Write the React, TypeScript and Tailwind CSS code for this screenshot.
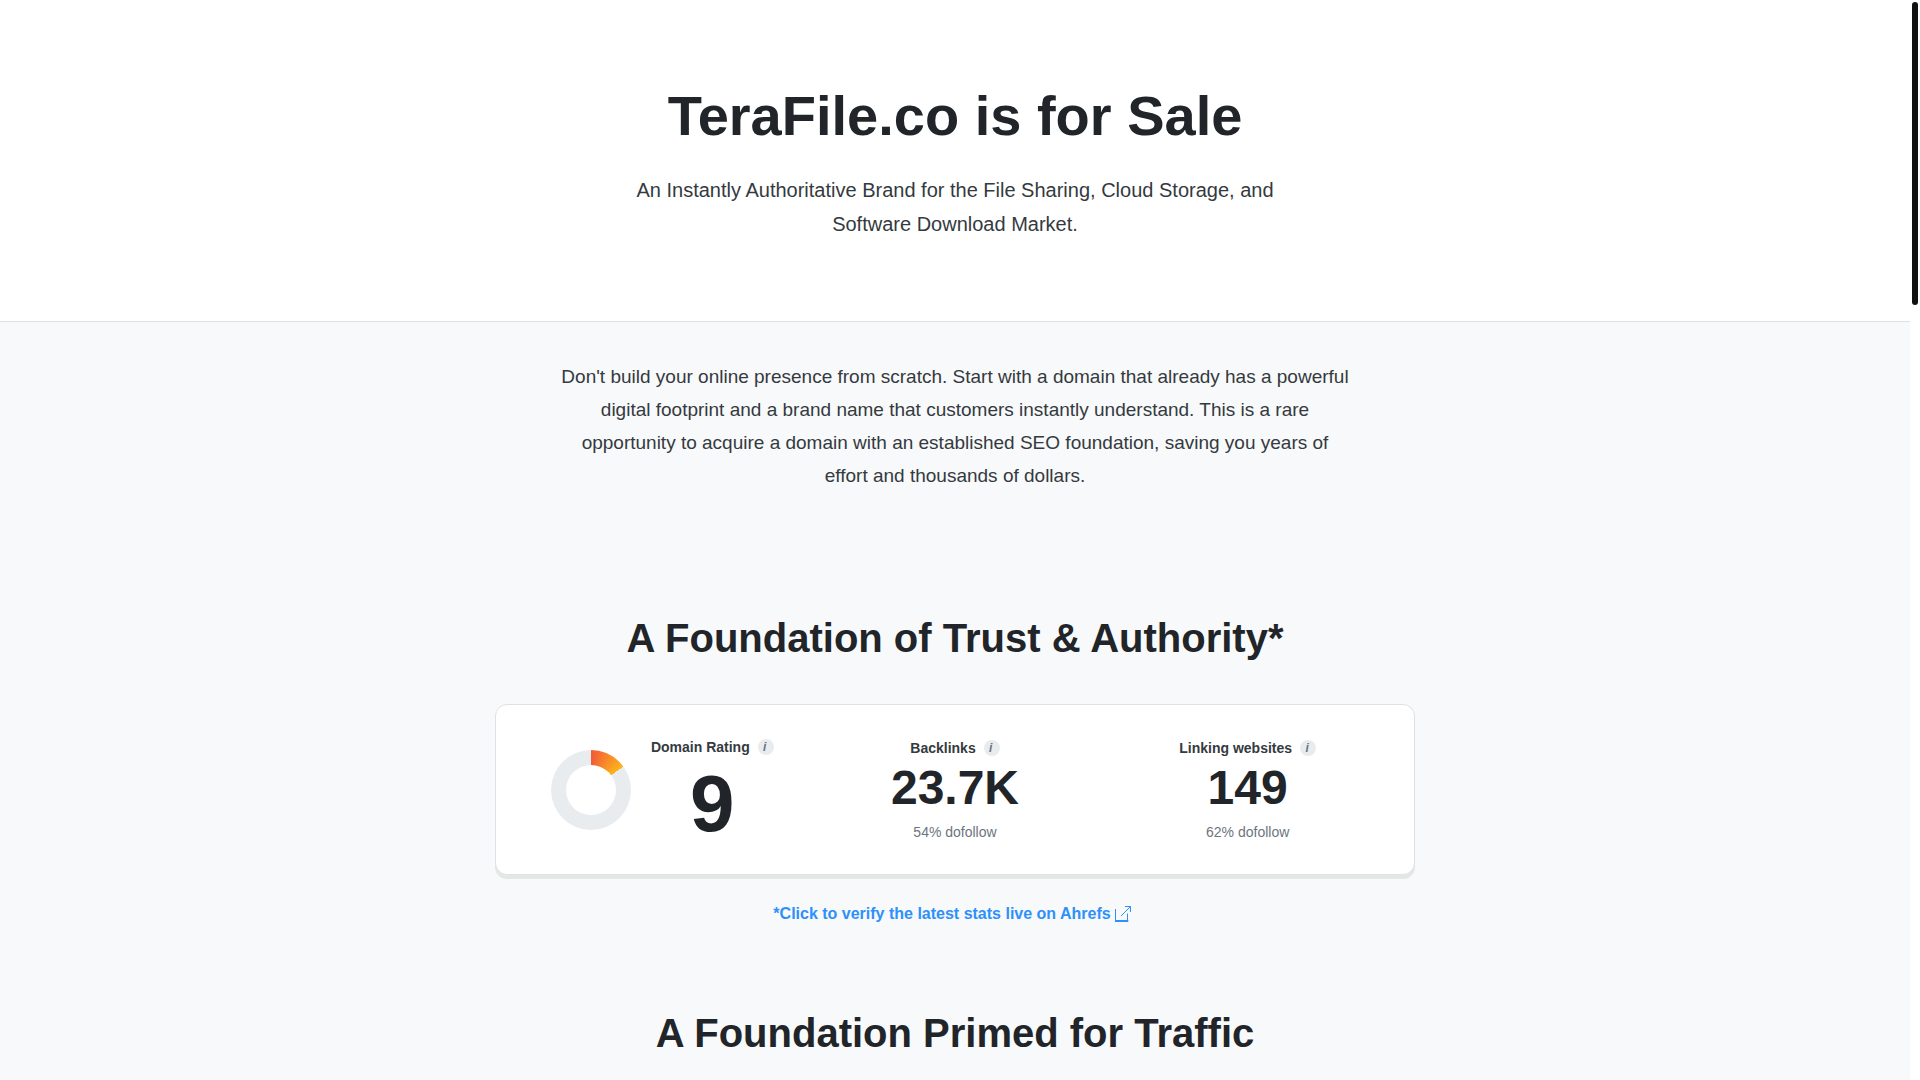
import React from 'react';

function Info({ label }: { label: string }) {
  return (
    <button
      type="button"
      aria-label={label}
      className="flex h-4 w-4 items-center justify-center rounded-full bg-[#e9ecef] pr-0.5 text-xs leading-4 font-bold text-[#6c757d] italic"
    >
      i
    </button>
  );
}

function StatLabel({ title }: { title: string }) {
  return (
    <h3 className="flex items-center justify-center gap-2 text-sm leading-7 font-bold text-[#343a40]">
      {title}
      <Info label={`About ${title}`} />
    </h3>
  );
}

function Stat({ title, value, note }: { title: string; value: string; note: string }) {
  return (
    <div className="text-center">
      <StatLabel title={title} />
      <p className="text-5xl leading-[51px] font-bold">{value}</p>
      <p className="mt-1.5 text-sm leading-[26px] text-[#6c757d]">{note}</p>
    </div>
  );
}

function RatingRing() {
  return (
    <div className="flex h-20 w-20 shrink-0 items-center justify-center rounded-full bg-[conic-gradient(#f15a38_0deg,#fdb41c_54deg,#e9ecef_54deg)]">
      <div className="h-[50px] w-[50px] rounded-full bg-white" />
    </div>
  );
}

function ExternalIcon() {
  return (
    <svg viewBox="0 0 16 16" className="h-4 w-4" fill="none" stroke="currentColor" aria-hidden="true">
      <path d="M0.5 3v12M12.5 7.5V15" strokeWidth="1" />
      <path d="M0.5 15h12" strokeWidth="2" strokeLinecap="round" />
      <path d="M6 10L15.5 0.5M10 0.5h5.5V6" strokeWidth="1" />
    </svg>
  );
}

export default function App() {
  return (
    <div className="flex h-screen overflow-hidden bg-white font-['Liberation_Sans',sans-serif] text-[#212529]">
      <div className="h-full flex-1 overflow-hidden bg-[#f8f9fa]">
        <header className="border-b border-[#dee2e6] bg-white px-6 py-20 text-center">
          <h1 className="text-[56px] leading-[71px] font-bold">TeraFile.co is for Sale</h1>
          <p className="mx-auto mt-[22px] max-w-[700px] text-xl leading-[34px] text-[#343a40]">
            An Instantly Authoritative Brand for the File Sharing, Cloud Storage, and Software Download Market.
          </p>
        </header>
        <main className="mx-auto max-w-[920px]">
          <p className="mx-auto mt-[38px] max-w-[790px] text-center text-[19px] leading-[33px] text-[#343a40]">
            Don't build your online presence from scratch. Start with a domain that already has a powerful digital
            footprint and a brand name that customers instantly understand. This is a rare opportunity to acquire a
            domain with an established SEO foundation, saving you years of effort and thousands of dollars.
          </p>
          <h2 className="mt-[122px] text-center text-[40px] leading-[48px] font-bold">
            A Foundation of Trust &amp; Authority*
          </h2>
          <section className="mt-[42px] grid grid-cols-3 items-center gap-6 rounded-xl border border-[#dee2e6] bg-white px-8 py-7 shadow-[0_4px_0_#e5e6e6]">
            <div className="flex items-center justify-center gap-5">
              <RatingRing />
              <div className="text-center">
                <StatLabel title="Domain Rating" />
                <p className="text-[80px] leading-[85px] font-bold">9</p>
              </div>
            </div>
            <Stat title="Backlinks" value="23.7K" note="54% dofollow" />
            <Stat title="Linking websites" value="149" note="62% dofollow" />
          </section>
          <div className="mt-[27px] flex justify-center">
            <a href="#ahrefs" className="flex items-center gap-1 pr-1.5 text-base leading-6 font-bold text-[#2e90fa]">
              *Click to verify the latest stats live on Ahrefs
              <ExternalIcon />
            </a>
          </div>
          <h2 className="mt-[83px] text-center text-[40px] leading-[48px] font-bold">
            A Foundation Primed for Traffic
          </h2>
        </main>
      </div>
      <div className="w-2.5 shrink-0 bg-white py-0.5">
        <div className="mx-auto h-[303px] w-1.5 rounded-full bg-[#111111]" />
      </div>
    </div>
  );
}
